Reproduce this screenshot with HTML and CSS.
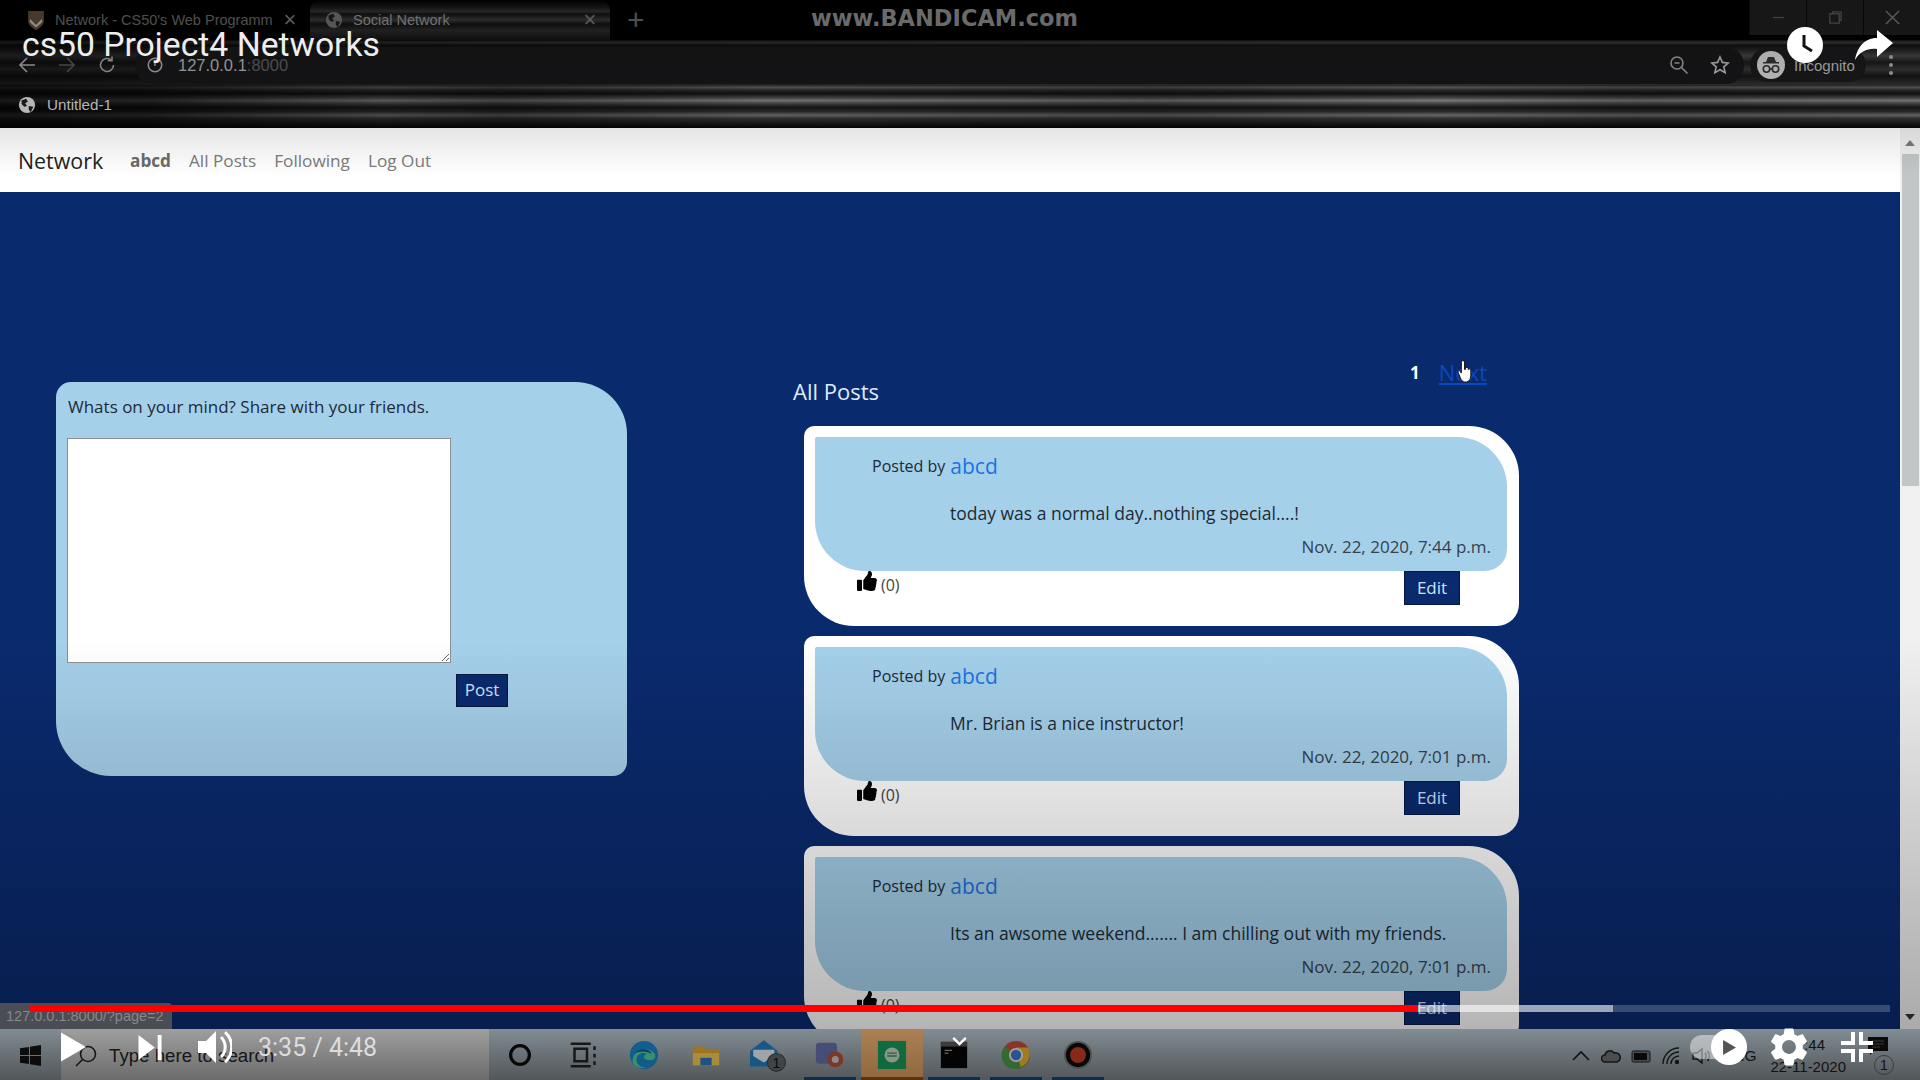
FILE: index.html

```html
<!DOCTYPE html>
<html lang="en">
<head>
  <meta charset="UTF-8" />
  <title>cs50 Project4 Networks</title>
  <link rel="stylesheet" href="styles.css">
</head>
<body>
  <div class="screen">

    <header class="browser">
      <div class="tabstrip">
        <div class="tab">
          <svg class="favicon" viewBox="0 0 20 24"><path d="M1 1h18v11c0 5-4 8-9 11-5-3-9-6-9-11z" fill="#5d4a3a"/><path d="M3 10l7 7 7-7v4l-7 6-7-6z" fill="#b9b6a8"/></svg>
          <span class="tab-title">Network - CS50's Web Programm</span>
          <span class="tab-close">×</span>
        </div>
        <div class="tab tab-active">
          <svg class="globe" viewBox="0 0 20 20"><circle cx="10" cy="10" r="9" fill="#6e6e6e"/><path d="M4 5l5-2 2 3-3 2 2 3-3 1-3-3zM12 11l5 1-3 6-2-3z" fill="#1c1c1c"/></svg>
          <span class="tab-title">Social Network</span>
          <span class="tab-close">×</span>
        </div>
        <span class="tab-new">+</span>
        <div class="win-controls">
          <span class="win-btn">
            <svg viewBox="0 0 16 16"><path d="M2 8h12" stroke="#555" stroke-width="1.4"/></svg>
          </span>
          <span class="win-btn">
            <svg viewBox="0 0 16 16" fill="none" stroke="#555" stroke-width="1.4"><path d="M2 4h10v10H2zM5 4V2h9v9h-2"/></svg>
          </span>
          <span class="win-btn">
            <svg viewBox="0 0 16 16"><path d="M1 1l14 14M15 1L1 15" stroke="#777" stroke-width="1.4"/></svg>
          </span>
        </div>
      </div>

      <div class="toolbar">
        <svg class="nav-icon" viewBox="0 0 20 20" fill="none" stroke="#a8a8a8" stroke-width="1.6"><path d="M18 10H3M10 3l-7 7 7 7"/></svg>
        <svg class="nav-icon" viewBox="0 0 20 20" fill="none" stroke="#555" stroke-width="1.6"><path d="M2 10h15M10 3l7 7-7 7"/></svg>
        <svg class="nav-icon" viewBox="0 0 20 20" fill="none" stroke="#a0a0a0" stroke-width="1.6"><path d="M16.5 10a6.5 6.5 0 1 1-2-4.7M15 1.5v4.2h-4.2"/></svg>
        <div class="omnibox">
          <svg class="info-icon" viewBox="0 0 20 20" fill="none" stroke="#a8a8a8" stroke-width="1.7"><circle cx="10" cy="10" r="7.5"/><path d="M10 5v6"/></svg>
          <span class="url">127.0.0.1<span class="url-dim">:8000</span></span>
          <svg class="omni-icon" viewBox="0 0 20 20" fill="none" stroke="#a0a0a0" stroke-width="1.6"><circle cx="8" cy="8" r="6"/><path d="M5.5 8h5M12.5 12.5l6 6"/></svg>
          <svg class="omni-icon" viewBox="0 0 20 20" fill="none" stroke="#bbb" stroke-width="1.6"><path d="M10 2l2.4 5.4 5.8.6-4.4 3.9 1.3 5.8L10 14.7l-5.1 3 1.3-5.8L1.800 8l5.800-.6z"/></svg>
        </div>
        <div class="incognito">
          <svg class="incog-icon" viewBox="0 0 28 28"><circle cx="14" cy="14" r="14" fill="#d4d4d4"/><path d="M9 11l2-5h6l2 5h3v1.500H6V11z" fill="#333"/><g fill="none" stroke="#333" stroke-width="1.600"><circle cx="9.500" cy="18" r="3.200"/><circle cx="18.500" cy="18" r="3.200"/><path d="M12.700 18h2.600"/></g></svg>
          <span class="incog-label">Incognito</span>
        </div>
        <span class="dots"><i></i><i></i><i></i></span>
      </div>

      <div class="bookmarks">
        <svg class="bm-globe" viewBox="0 0 20 20"><circle cx="10" cy="10" r="9" fill="#d0d0d0"/><path d="M4 5l5-2 2 3-3 2 2 3-3 1-3-3zM12 11l5 1-3 6-2-3z" fill="#1c1c1c"/></svg>
        <span class="bm-label">Untitled-1</span>
      </div>
    </header>

    <div class="viewport">
      <div class="page">
        <nav class="navbar">
          <span class="brand">Network</span>
          <a class="nav-user">abcd</a>
          <a class="nav-link">All Posts</a>
          <a class="nav-link">Following</a>
          <a class="nav-link">Log Out</a>
        </nav>

        <main class="content">
          <form class="composer">
            <p class="composer-label">Whats on your mind? Share with your friends.</p>
            <div class="composer-row">
              <textarea class="composer-input"></textarea>
            </div>
            <div class="composer-actions">
              <button type="button" class="btn">Post</button>
            </div>
          </form>

          <section class="feed">
            <div class="feed-head">
              <h2 class="feed-title">All Posts</h2>
              <div class="pager">
                <span class="pager-num">1</span>
                <a class="pager-next">Next</a>
              </div>
            </div>

            <article class="post">
              <div class="post-body">
                <div class="post-author">Posted by <a>abcd</a></div>
                <p class="post-text">today was a normal day..nothing special....!</p>
                <p class="post-date">Nov. 22, 2020, 7:44 p.m.</p>
              </div>
              <div class="post-foot">
                <span class="likes">
                  <svg class="thumb" viewBox="0 0 512 512"><path d="M104 224H24c-13.255 0-24 10.745-24 24v240c0 13.255 10.745 24 24 24h80c13.255 0 24-10.745 24-24V248c0-13.255-10.745-24-24-24zM384 81.452c0 42.416-25.97 66.208-33.277 94.548h101.723c33.397 0 59.397 27.746 59.553 58.098.084 17.938-7.546 37.249-19.439 49.197l-.11.11c9.836 23.337 8.237 56.037-9.308 79.469 8.681 25.895-.069 57.704-16.382 74.757 4.298 17.598 2.244 32.575-6.148 44.632C440.202 511.587 389.616 512 346.839 512l-2.845-.001c-48.287-.017-87.806-17.598-119.56-31.725-15.957-7.099-36.821-15.887-52.651-16.178-6.54-.12-11.783-5.457-11.783-11.998v-213.77c0-3.2 1.282-6.271 3.558-8.521 39.614-39.144 56.648-80.587 89.117-113.111 14.804-14.832 20.188-37.236 25.393-58.902C282.515 39.293 291.817 0 312 0c24 0 72 8 72 81.452z"/></svg>
                  <span class="like-count">(0)</span>
                </span>
                <button type="button" class="btn btn-edit">Edit</button>
              </div>
            </article>

            <article class="post">
              <div class="post-body">
                <div class="post-author">Posted by <a>abcd</a></div>
                <p class="post-text">Mr. Brian is a nice instructor!</p>
                <p class="post-date">Nov. 22, 2020, 7:01 p.m.</p>
              </div>
              <div class="post-foot">
                <span class="likes">
                  <svg class="thumb" viewBox="0 0 512 512"><path d="M104 224H24c-13.255 0-24 10.745-24 24v240c0 13.255 10.745 24 24 24h80c13.255 0 24-10.745 24-24V248c0-13.255-10.745-24-24-24zM384 81.452c0 42.416-25.97 66.208-33.277 94.548h101.723c33.397 0 59.397 27.746 59.553 58.098.084 17.938-7.546 37.249-19.439 49.197l-.11.11c9.836 23.337 8.237 56.037-9.308 79.469 8.681 25.895-.069 57.704-16.382 74.757 4.298 17.598 2.244 32.575-6.148 44.632C440.202 511.587 389.616 512 346.839 512l-2.845-.001c-48.287-.017-87.806-17.598-119.56-31.725-15.957-7.099-36.821-15.887-52.651-16.178-6.54-.12-11.783-5.457-11.783-11.998v-213.77c0-3.2 1.282-6.271 3.558-8.521 39.614-39.144 56.648-80.587 89.117-113.111 14.804-14.832 20.188-37.236 25.393-58.902C282.515 39.293 291.817 0 312 0c24 0 72 8 72 81.452z"/></svg>
                  <span class="like-count">(0)</span>
                </span>
                <button type="button" class="btn btn-edit">Edit</button>
              </div>
            </article>

            <article class="post">
              <div class="post-body">
                <div class="post-author">Posted by <a>abcd</a></div>
                <p class="post-text">Its an awsome weekend....... I am chilling out with my friends.</p>
                <p class="post-date">Nov. 22, 2020, 7:01 p.m.</p>
              </div>
              <div class="post-foot">
                <span class="likes">
                  <svg class="thumb" viewBox="0 0 512 512"><path d="M104 224H24c-13.255 0-24 10.745-24 24v240c0 13.255 10.745 24 24 24h80c13.255 0 24-10.745 24-24V248c0-13.255-10.745-24-24-24zM384 81.452c0 42.416-25.97 66.208-33.277 94.548h101.723c33.397 0 59.397 27.746 59.553 58.098.084 17.938-7.546 37.249-19.439 49.197l-.11.11c9.836 23.337 8.237 56.037-9.308 79.469 8.681 25.895-.069 57.704-16.382 74.757 4.298 17.598 2.244 32.575-6.148 44.632C440.202 511.587 389.616 512 346.839 512l-2.845-.001c-48.287-.017-87.806-17.598-119.56-31.725-15.957-7.099-36.821-15.887-52.651-16.178-6.54-.12-11.783-5.457-11.783-11.998v-213.77c0-3.2 1.282-6.271 3.558-8.521 39.614-39.144 56.648-80.587 89.117-113.111 14.804-14.832 20.188-37.236 25.393-58.902C282.515 39.293 291.817 0 312 0c24 0 72 8 72 81.452z"/></svg>
                  <span class="like-count">(0)</span>
                </span>
                <button type="button" class="btn btn-edit">Edit</button>
              </div>
            </article>
          </section>
        </main>
      </div>

      <aside class="scrollbar">
        <span class="scroll-up"></span>
        <span class="scroll-thumb"></span>
        <span class="scroll-down"></span>
      </aside>
    </div>

    <footer class="taskbar">
      <span class="win-logo">
        <svg viewBox="0 0 20 20" fill="#111"><path d="M0 3l8.500-1.200v7.700H0zM9.500 1.600L20 0v9.500H9.500zM0 10.500h8.500v7.700L0 17zM9.500 10.500H20V20L9.500 18.400z"/></svg>
      </span>
      <div class="search">
        <svg class="search-icon" viewBox="0 0 24 24" fill="none" stroke="#222" stroke-width="1.600"><circle cx="14" cy="10" r="7.500"/><path d="M8.500 15.500L2 22"/></svg>
        <span class="search-text">Type here to search</span>
      </div>
      <span class="task-item">
        <svg viewBox="0 0 24 24" fill="none" stroke="#0c0c0c" stroke-width="2.600"><circle cx="12" cy="12" r="7.500"/></svg>
      </span>
      <span class="task-item">
        <svg viewBox="0 0 24 24" fill="none" stroke="#222" stroke-width="2"><path d="M6 7h10v10H6zM3 3h16M3 21h16M22 5v3M22 11v3M22 17v3"/></svg>
      </span>
      <span class="task-item">
        <svg viewBox="0 0 32 32"><circle cx="16" cy="16" r="15" fill="#1a86c8"/><path d="M4 20C6 10 20 6 27 14c2 3 1 6-2 7-4 1-9 0-9-3 0-2 2-3 3-3-4-3-11 0-11 6 0 5 5 9 11 8-8 3-17-2-15-9z" fill="#4fd1a0"/><path d="M6 15c1-3 7-6 12-5 4 1 6 3 6 5-4-3-13-4-18 0z" fill="#0d5aa0"/></svg>
      </span>
      <span class="task-item">
        <svg viewBox="0 0 32 32"><path d="M2 7h11l3 3h14v17H2z" fill="#e3a72f"/><path d="M2 14h28v13H2z" fill="#f4cc57"/><path d="M10 19h12v8H10z" fill="#2b79bd"/></svg>
      </span>
      <span class="task-item">
        <svg class="mail-icon" viewBox="0 0 36 32"><path d="M1 12L14 2l13 10v15H1z" fill="#1f7fc4"/><path d="M4 11h20v6l-10 6-10-6z" fill="#e9eef2"/><circle cx="26" cy="23" r="8.500" fill="#5d6468" stroke="#3b4044"/><text x="26" y="28" text-anchor="middle" class="badge-num">1</text></svg>
      </span>
      <span class="task-item task-open">
        <svg viewBox="0 0 34 32"><rect x="1" y="2" width="24" height="24" rx="4" fill="#6570a8"/><circle cx="23" cy="21" r="9" fill="#b5503a"/><circle cx="23" cy="21" r="4" fill="#c9c9c9"/></svg>
      </span>
      <span class="task-item task-open task-hot">
        <svg viewBox="0 0 32 32"><rect x="1" y="1" width="30" height="30" fill="#1a9a5c"/><circle cx="16" cy="16" r="8" fill="#c9d9c9"/><path d="M11 14h10M11 17h10" stroke="#3d8a5c" stroke-width="1.500"/></svg>
      </span>
      <span class="task-item task-open">
        <svg viewBox="0 0 32 32"><rect x="2" y="2" width="28" height="28" fill="#060606"/><path d="M2 2h28v5H2z" fill="#565656"/><path d="M6 11h8M6 14h4" stroke="#999" stroke-width="1.200"/></svg>
      </span>
      <span class="task-item task-open">
        <svg viewBox="0 0 32 32"><circle cx="16" cy="16" r="15" fill="#c9493a"/><path d="M16 16L29 23a15 15 0 0 1-22 5z" fill="#4a9a4a"/><path d="M16 16L9 30A15 15 0 0 1 4 7z" fill="#4a9a4a"/><path d="M16 8h13a15 15 0 0 1-8 21z" fill="#e3b52f"/><circle cx="16" cy="16" r="7.500" fill="#e8e8e8"/><circle cx="16" cy="16" r="5.500" fill="#3e78d0"/></svg>
      </span>
      <span class="task-item task-open">
        <svg viewBox="0 0 32 32"><circle cx="16" cy="16" r="15" fill="#777"/><circle cx="16" cy="16" r="13" fill="#0b0b0b"/><circle cx="16" cy="16" r="8.500" fill="#c43c20"/></svg>
      </span>

      <div class="tray">
        <svg class="tray-icon" viewBox="0 0 20 20" fill="none" stroke="#151515" stroke-width="1.600"><path d="M2 14l8-8 8 8"/></svg>
        <svg class="tray-icon" viewBox="0 0 20 20" fill="#6d7071" stroke="#1d1d1d" stroke-width="1.500"><path d="M4 16a3.500 3.500 0 0 1 0-7 5 5 0 0 1 9-2 4.500 4.500 0 0 1 3 9z"/></svg>
        <svg class="tray-icon" viewBox="0 0 20 20"><rect x="1" y="5" width="18" height="11" rx="1.500" fill="#6d7071" stroke="#1d1d1d"/><rect x="3" y="7" width="13" height="7" fill="#0d0d0d"/></svg>
        <svg class="tray-icon" viewBox="0 0 20 20" fill="none" stroke="#1d1d1d" stroke-width="1.400"><path d="M2 18a16 16 0 0 1 16-16M6 18A12 12 0 0 1 18 6M10 18a8 8 0 0 1 8-8"/><circle cx="16" cy="16" r="1.500" fill="#1d1d1d"/></svg>
        <svg class="tray-icon" viewBox="0 0 20 20" fill="none" stroke="#1d1d1d" stroke-width="1.400"><path d="M2 7h4l5-4v14l-5-4H2zM14 7a5 5 0 0 1 0 6M16.500 5a8 8 0 0 1 0 10"/></svg>
        <span class="tray-lang">ENG</span>
        <div class="clock">
          <span>7:44</span>
          <span>22-11-2020</span>
        </div>
        <div class="notify">
          <svg viewBox="0 0 20 18"><path d="M0 0h20v14H6l-4 4v-4H0z" fill="#0e0e0e"/><path d="M4 4h12M4 7h12M4 10h8" stroke="#555" stroke-width="1"/></svg>
          <span class="notify-badge">1</span>
        </div>
      </div>
    </footer>

    <!-- video player chrome, lies over the recording -->
    <div class="shade-top"></div>
    <div class="shade-bottom"></div>
    <div class="watermark">www.BANDICAM.com</div>
    <div class="video-title">cs50 Project4 Networks</div>
    <div class="yt-top">
      <svg class="yt-clock" viewBox="0 0 36 36"><circle cx="18" cy="18" r="18" fill="#fff"/><path d="M17 8v11l8 5" fill="none" stroke="#111" stroke-width="3"/></svg>
      <svg class="yt-share" viewBox="0 0 38 30"><path d="M22 0l16 13-16 14v-8C13 18 5 21 0 30 2 18 9 8 22 8z" fill="#fff"/></svg>
    </div>
    <svg class="hand" viewBox="0 0 14 22"><path d="M4 2a1.500 1.500 0 0 1 3 0v7h1V8a1.300 1.300 0 0 1 2.500 0v1h.3a1.200 1.200 0 0 1 2.200.5V15c0 3-1.500 5.500-4 6H7c-2 0-3-2-4-4L1 12c-.6-1.500 1-2.300 2-1l1 1.500z" fill="#fff" stroke="#111" stroke-width=".9"/></svg>
    <svg class="task-peek" viewBox="0 0 16 10"><path d="M1 1l7 7 7-7" fill="none" stroke="#fff" stroke-width="2.600"/></svg>
    <div class="status-bubble">127.0.0.1:8000/?page=2</div>
    <div class="progress">
      <span class="progress-played"></span>
      <span class="progress-buffered"></span>
    </div>
    <div class="player">
      <svg class="ctl-play" viewBox="0 0 26 30"><path d="M0 0l26 15L0 30z" fill="#fff"/></svg>
      <svg class="ctl-next" viewBox="0 0 24 26"><path d="M0 0l17 13L0 26zM20 0h4v26h-4z" fill="#fff"/></svg>
      <svg class="ctl-vol" viewBox="0 0 34 34"><path d="M0 11h8L18 1v32L8 23H0z" fill="#fff"/><path d="M23 7a14 14 0 0 1 0 20M27 2a20 20 0 0 1 0 30" fill="none" stroke="#fff" stroke-width="3"/></svg>
      <span class="ctl-time">3:35 / 4:48</span>
      <div class="ctl-right">
        <span class="autoplay">
          <span class="autoplay-knob">
            <svg viewBox="0 0 12 14"><path d="M0 0l12 7-12 7z" fill="#555"/></svg>
          </span>
        </span>
        <svg class="ctl-gear" viewBox="0 0 24 24"><path fill="#fff" fill-rule="evenodd" d="M19.140 12.940c.04-.3.06-.61.06-.94 0-.32-.02-.64-.07-.94l2.030-1.580c.18-.14.23-.41.12-.61l-1.920-3.320c-.12-.22-.37-.29-.59-.22l-2.390.96c-.5-.38-1.030-.7-1.620-.94l-.36-2.540c-.04-.24-.24-.41-.48-.41h-3.840c-.24 0-.43.17-.47.41l-.36 2.540c-.59.24-1.130.57-1.620.94l-2.390-.96c-.22-.08-.47 0-.59.22L2.740 8.870c-.12.21-.08.47.12.61l2.030 1.580c-.05.3-.09.63-.09.94s.02.64.07.94l-2.030 1.580c-.18.14-.23.41-.12.61l1.920 3.320c.12.22.37.29.59.22l2.390-.96c.5.38 1.030.7 1.620.94l.36 2.540c.05.24.24.41.48.41h3.840c.24 0 .44-.17.47-.41l.36-2.540c.59-.24 1.130-.56 1.620-.94l2.390.96c.22.08.47 0 .59-.22l1.920-3.320c.12-.22.07-.47-.12-.61l-2.010-1.580zM12 15.600c-1.980 0-3.600-1.620-3.600-3.600s1.620-3.600 3.600-3.600 3.600 1.620 3.600 3.600-1.620 3.600-3.600 3.600z"/></svg>
        <svg class="ctl-exit" viewBox="0 0 32 30"><path d="M10 0h4v13H0V9h10zM18 0h4v9h10v4H18zM0 17h14v13h-4v-9H0zM18 17h14v4H22v9h-4z" fill="#fff"/></svg>
      </div>
    </div>
  </div>
</body>
</html>
```

FILE: styles.css

```css
* {
  box-sizing: border-box;
}
html, body {
  margin: 0;
  padding: 0;
  background: #000;
}
p, h2 {
  margin: 0;
  font-weight: normal;
}
.screen {
  position: relative;
  width: 1920px;
  height: 1080px;
  overflow: hidden;
  display: flex;
  flex-direction: column;
  font-family: "Open Sans", "Noto Sans", sans-serif;
}

/* browser chrome */
.browser {
  height: 128px;
  flex: none;
  background: #000;
  color: #777;
  font-size: 14px;
}
.tabstrip {
  height: 40px;
  display: flex;
  align-items: flex-start;
  position: relative;
}
.tab {
  width: 300px;
  height: 40px;
  padding-left: 27px;
  display: flex;
  align-items: center;
  flex: none;
}
.tab:first-child {
  width: 310px;
}
.tab-active {
  padding-left: 15px;
  border-radius: 10px 10px 0 0;
  background: linear-gradient(#000 0, #1c1c1c 20%, #333 28%, #141414 36%, #3a3a3a 50%, #111 60%, #2a2a2a 75%, #121212 100%);
}
.favicon {
  width: 18px;
  height: 21px;
  flex: none;
}
.globe {
  width: 18px;
  height: 18px;
  flex: none;
}
.tab-title {
  margin-left: 10px;
  flex: 1;
  white-space: nowrap;
  overflow: hidden;
  font-family: "Liberation Sans", sans-serif;
  font-size: 14.500px;
  color: #666;
}
.tab-active .tab-title {
  color: #929292;
}
.tab-close {
  width: 20px;
  margin-right: 10px;
  text-align: center;
  font-size: 22px;
  color: #777;
  font-family: "Liberation Sans", sans-serif;
}
.tab-new {
  margin-left: 17px;
  margin-top: 1px;
  font-size: 30px;
  line-height: 38px;
  color: #666;
  font-family: "Liberation Sans", sans-serif;
}
.win-controls {
  margin-left: auto;
  width: 171px;
  height: 35px;
  display: flex;
  background: #1e1e1e;
}
.win-btn {
  flex: 1;
  display: flex;
  align-items: center;
  justify-content: center;
  border-left: 1px solid #0a0a0a;
}
.win-btn svg {
  width: 15px;
  height: 15px;
}
.toolbar {
  height: 45px;
  display: flex;
  align-items: center;
  padding-top: 5px;
  padding-left: 17px;
  background:
    linear-gradient(to right, rgba(0,0,0,.5) 0, rgba(0,0,0,.2) 30%, rgba(0,0,0,0) 70%),
    linear-gradient(#0c0c0c 0, #3a3a3a 5%, #111 12%, #2a2a2a 25%, #444 35%, #1a1a1a 50%, #383838 65%, #141414 80%, #333 100%);
}
.nav-icon {
  width: 20px;
  height: 20px;
  flex: none;
  margin-right: 20px;
}
.omnibox {
  width: 1609px;
  height: 37px;
  flex: none;
  margin-left: -2px;
  padding-left: 11px;
  padding-right: 14px;
  display: flex;
  align-items: center;
  border-radius: 18px;
  background: #171719;
}
.info-icon {
  width: 18px;
  height: 18px;
}
.url {
  margin-left: 14px;
  margin-right: auto;
  font-family: "Liberation Sans", sans-serif;
  font-size: 16.500px;
  color: #b0b0b0;
}
.url-dim {
  color: #5c5c5c;
}
.omni-icon {
  width: 20px;
  height: 20px;
  margin-left: 21px;
}
.incognito {
  margin-left: 6px;
  width: 116px;
  height: 34px;
  padding-left: 7px;
  flex: none;
  display: flex;
  align-items: center;
  border-radius: 18px;
  background: #1a1a1c;
}
.incog-icon {
  width: 28px;
  height: 28px;
  flex: none;
}
.incog-label {
  margin-left: 9px;
  font-family: "Liberation Sans", sans-serif;
  font-size: 15px;
  color: #b8b8b8;
}
.dots {
  margin-left: 23px;
  display: flex;
  flex-direction: column;
  gap: 4px;
}
.dots i {
  width: 4px;
  height: 4px;
  border-radius: 50%;
  background: #aaa;
}
.bookmarks {
  height: 43px;
  padding-left: 18px;
  padding-bottom: 4px;
  display: flex;
  align-items: center;
  background:
    linear-gradient(to right, rgba(0,0,0,.8) 0, rgba(0,0,0,.7) 8%, rgba(0,0,0,.3) 20%, rgba(0,0,0,.45) 26%, rgba(0,0,0,.1) 40%, rgba(0,0,0,.3) 60%, rgba(0,0,0,.05) 75%, rgba(0,0,0,.25) 85%, rgba(0,0,0,.1) 100%),
    linear-gradient(#2a2a2a 0, #6a6a6a 5%, #333 12%, #151515 20%, #555 30%, #909090 36%, #4a4a4a 44%, #1a1a1a 52%, #333 62%, #7a7a7a 70%, #3a3a3a 78%, #1a1a1a 90%, #050505 100%);
}
.bm-globe {
  width: 18px;
  height: 18px;
  flex: none;
}
.bm-label {
  margin-left: 11px;
  font-family: "Liberation Sans", sans-serif;
  font-size: 15.200px;
  color: #cfcfcf;
}

/* page in the browser */
.viewport {
  flex: 1;
  min-height: 0;
  display: flex;
}
.page {
  width: 1900px;
  flex: none;
  display: flex;
  flex-direction: column;
  overflow: hidden;
  background: #0a2a6e;
}
.navbar {
  height: 64px;
  flex: none;
  display: flex;
  align-items: center;
  padding-left: 18px;
  background: #fff;
  font-size: 17.200px;
}
.brand {
  width: 112px;
  font-size: 21.400px;
  color: #222;
}
.nav-user {
  margin-right: 18px;
  font-weight: bold;
  color: #6a6a6a;
}
.nav-link {
  margin-right: 18px;
  color: #7b7b7b;
}
.content {
  display: flex;
  align-items: flex-start;
  padding-left: 56px;
}
.composer {
  width: 571px;
  height: 394px;
  margin-top: 190px;
  padding: 11px 11px 0;
  flex: none;
  background: #a5d0ea;
  border-radius: 15px 52px 14px 55px;
}
.composer-label {
  padding-left: 1px;
  font-size: 17px;
  line-height: 28px;
  color: #1c2a36;
}
.composer-row {
  margin-top: 17px;
}
.composer-input {
  display: block;
  width: 384px;
  height: 225px;
  border: 1px solid #8a8f92;
  background: #fff;
  border-radius: 0;
  margin: 0;
}
.composer-actions {
  display: flex;
  justify-content: flex-end;
  margin-top: 11px;
  margin-right: -11px;
  padding-right: 119px;
}
.btn {
  height: 34px;
  padding: 0 0 2px;
  font-family: inherit;
  font-size: 17px;
  color: #cfe2f7;
  background: #0a2a6e;
  border: 1px solid #05173f;
  border-radius: 0;
}
.composer-actions .btn {
  width: 52px;
  height: 33px;
}
.feed {
  width: 726px;
  margin-left: 166px;
  flex: none;
  margin-top: 170px;
}
.feed-head {
  height: 64px;
  display: flex;
  justify-content: space-between;
  padding-right: 32px;
}
.feed-title {
  margin-top: 14px;
  font-size: 22px;
  line-height: 30px;
  color: #dfeafb;
}
.pager {
  display: flex;
  align-items: flex-start;
  gap: 19px;
  font-size: 17px;
  line-height: 21px;
}
.pager-num {
  font-weight: bold;
  color: #fff;
}
.pager-next {
  font-size: 22px;
  color: #0b47c0;
  text-decoration: underline;
}
.post {
  height: 200px;
  margin-left: 11px;
  margin-bottom: 10px;
  padding: 11px 12px 0 11px;
  background: #fff;
  border-radius: 10px 50px 22px 50px;
}
.post-body {
  height: 134px;
  padding: 16px 16px 0 57px;
  background: #a5d0ea;
  border-radius: 2px 50px 22px 50px;
  color: #1c2a36;
}
.post-author {
  height: 26px;
  display: flex;
  align-items: center;
  gap: 5px;
  font-size: 16px;
}
.post-author a {
  font-size: 21px;
  color: #1a73e0;
}
.post-text {
  margin-top: 22px;
  padding-left: 78px;
  font-size: 17.500px;
  line-height: 24px;
}
.post-date {
  margin-top: 10px;
  text-align: right;
  font-size: 17px;
  line-height: 24px;
  color: #33424f;
}
.post-foot {
  display: flex;
  align-items: flex-start;
  padding-left: 42px;
  padding-right: 47px;
}
.likes {
  display: flex;
  align-items: flex-start;
  gap: 4px;
}
.thumb {
  width: 20px;
  height: 20px;
}
.like-count {
  margin-top: 3px;
  font-size: 16px;
  line-height: 22px;
  color: #444;
}
.btn-edit {
  width: 56px;
  margin-left: auto;
}
.scrollbar {
  width: 20px;
  flex: none;
  display: flex;
  flex-direction: column;
  align-items: center;
  background: #f0f0f0;
}
.scroll-up {
  margin-top: 12px;
  border-left: 5px solid transparent;
  border-right: 5px solid transparent;
  border-bottom: 6px solid #7a7a7a;
}
.scroll-thumb {
  width: 17px;
  height: 332px;
  margin-top: 8px;
  background: #c3c6c7;
}
.scroll-down {
  margin-top: auto;
  margin-bottom: 9px;
  border-left: 5px solid transparent;
  border-right: 5px solid transparent;
  border-top: 6px solid #333;
}

/* windows taskbar */
.taskbar {
  height: 51px;
  flex: none;
  display: flex;
  align-items: stretch;
  background: linear-gradient(#b6c6d0, #7b8286);
}
.win-logo {
  width: 61px;
  flex: none;
  display: flex;
  align-items: center;
  justify-content: center;
  padding-top: 2px;
}
.win-logo svg {
  width: 21px;
  height: 21px;
}
.search {
  width: 428px;
  flex: none;
  padding: 2px 0 0 13px;
  display: flex;
  align-items: center;
  background: linear-gradient(#e0e0e0, #a0a0a0);
}
.search-icon {
  width: 24px;
  height: 24px;
  flex: none;
}
.search-text {
  margin-left: 11px;
  font-family: "Liberation Sans", sans-serif;
  font-size: 18.700px;
  color: #222;
}
.task-item {
  position: relative;
  width: 62px;
  flex: none;
  display: flex;
  align-items: center;
  justify-content: center;
  padding-top: 1px;
}
.task-item svg {
  width: 30px;
  height: 30px;
}
.task-item .mail-icon {
  width: 38px;
  height: 34px;
}
.task-open::after {
  content: "";
  position: absolute;
  left: 5px;
  right: 5px;
  bottom: 0;
  height: 3px;
  background: #14446e;
}
.task-hot {
  background: linear-gradient(#f3b577, #d59a5e);
}
.task-hot::after {
  left: 0;
  right: 0;
  background: #8a4a10;
}
.badge-num {
  font-family: "Liberation Sans", sans-serif;
  font-size: 14px;
  fill: #111;
}
.tray {
  margin-left: auto;
  padding-top: 2px;
  padding-right: 28px;
  display: flex;
  align-items: center;
  gap: 10px;
  color: #1a1a1a;
  font-family: "Liberation Sans", sans-serif;
}
.tray-icon {
  width: 20px;
  height: 20px;
  flex: none;
}
.tray-lang {
  width: 33px;
  margin-left: 2px;
  font-size: 15.500px;
}
.clock {
  width: 80px;
  display: flex;
  flex-direction: column;
  align-items: flex-end;
  font-size: 15px;
  line-height: 22px;
}
.clock span:first-child {
  padding-right: 21px;
}
.notify {
  position: relative;
  width: 24px;
  height: 40px;
  margin-left: 12px;
  flex: none;
}
.notify svg {
  width: 20px;
  height: 18px;
  margin-top: 1px;
}
.notify-badge {
  position: absolute;
  left: 6px;
  top: 19px;
  width: 20px;
  height: 20px;
  border: 1px solid #555;
  border-radius: 50%;
  font-size: 14px;
  line-height: 18px;
  text-align: center;
}

/* youtube overlay */
.shade-top {
  position: absolute;
  left: 0;
  right: 0;
  top: 0;
  height: 175px;
  background: linear-gradient(rgba(0,0,0,.25), rgba(0,0,0,.1) 73%, rgba(0,0,0,0));
  pointer-events: none;
}
.shade-bottom {
  position: absolute;
  left: 0;
  right: 0;
  bottom: 0;
  height: 440px;
  background: linear-gradient(rgba(0,0,0,0), rgba(0,0,0,.33));
  pointer-events: none;
}
.watermark {
  position: absolute;
  left: 811px;
  top: 5px;
  font-family: "DejaVu Sans", sans-serif;
  font-size: 22.500px;
  font-weight: bold;
  color: #6a6a6a;
}
.video-title {
  position: absolute;
  left: 22px;
  top: 25px;
  font-family: Roboto, sans-serif;
  font-size: 33.700px;
  line-height: 40px;
  color: #eee;
}
.yt-top {
  position: absolute;
  left: 1787px;
  top: 27px;
  display: flex;
  align-items: flex-start;
  gap: 32px;
}
.yt-clock {
  width: 36px;
  height: 36px;
}
.yt-share {
  width: 38px;
  height: 30px;
  margin-top: 3px;
}
.hand {
  position: absolute;
  left: 1457px;
  top: 360px;
  width: 15px;
  height: 23px;
}
.task-peek {
  position: absolute;
  left: 952px;
  top: 1037px;
  width: 15px;
  height: 9px;
}
.status-bubble {
  position: absolute;
  left: 0;
  top: 1003px;
  width: 172px;
  height: 26px;
  padding: 5px 0 0 6px;
  font-family: "Liberation Sans", sans-serif;
  font-size: 14.500px;
  color: #888;
  background: rgba(86,86,86,.85);
  border-radius: 0 4px 0 0;
}
.progress {
  position: absolute;
  left: 30px;
  top: 1005px;
  width: 1860px;
  height: 7px;
  display: flex;
  background: rgba(255,255,255,.2);
}
.progress-played {
  width: 1388px;
  background: #f00;
}
.progress-buffered {
  width: 195px;
  background: rgba(255,255,255,.5);
}
.player {
  position: absolute;
  left: 61px;
  right: 47px;
  top: 1029px;
  height: 36px;
  display: flex;
  align-items: center;
}
.ctl-play {
  width: 25px;
  height: 30px;
  flex: none;
}
.ctl-next {
  width: 24px;
  height: 25px;
  flex: none;
  margin-left: 52px;
}
.ctl-vol {
  width: 34px;
  height: 34px;
  flex: none;
  margin-left: 36px;
}
.ctl-time {
  margin-left: 26px;
  font-family: Roboto, sans-serif;
  font-size: 25px;
  color: #ddd;
}
.ctl-right {
  margin-left: auto;
  display: flex;
  align-items: center;
}
.autoplay {
  width: 57px;
  height: 24px;
  margin-right: -2px;
  display: flex;
  align-items: center;
  justify-content: flex-end;
  border-radius: 12px;
  background: rgba(255,255,255,.45);
}
.autoplay-knob {
  width: 36px;
  height: 36px;
  display: flex;
  align-items: center;
  justify-content: center;
  flex: none;
  border-radius: 50%;
  background: #fff;
}
.autoplay-knob svg {
  width: 13px;
  height: 15px;
}
.ctl-gear {
  width: 46px;
  height: 46px;
  margin-left: 21px;
}
.ctl-exit {
  width: 32px;
  height: 30px;
  margin-left: 29px;
}
```
